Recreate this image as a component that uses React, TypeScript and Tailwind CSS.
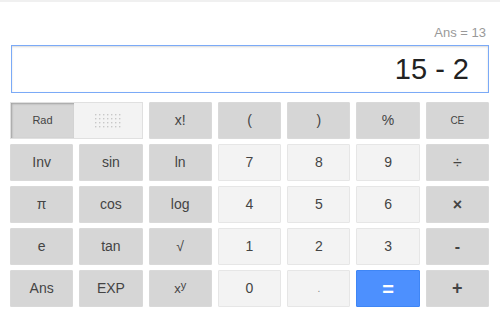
import type { ReactNode } from 'react'

type Kind = 'gray' | 'light' | 'blue'

function Key({ kind = 'gray', className = '', children }: { kind?: Kind; className?: string; children: ReactNode }) {
  const look =
    kind === 'blue'
      ? 'bg-[#4d90fe] border-[#3f86f5] text-white'
      : kind === 'light'
        ? 'bg-[#f3f3f3] border-[#e6e6e6] text-[#444]'
        : 'bg-[#d6d6d6] border-[#d9d9d9] text-[#444]'
  return (
    <div className={`flex h-[37px] items-center justify-center rounded-[1px] border ${look} ${className}`}>
      {children}
    </div>
  )
}

function Grip() {
  const dots = []
  for (let r = 0; r < 4; r++)
    for (let c = 0; c < 7; c++) dots.push(<rect key={`${r}-${c}`} x={c * 4} y={r * 4} width="1.4" height="1.4" fill="#c8c8c8" />)
  return (
    <svg width="26" height="14" viewBox="0 0 26 14">
      {dots}
    </svg>
  )
}

export default function App() {
  return (
    <div className="h-[317px] w-[500px] overflow-hidden border-t-2 border-[#f0f0f0] bg-white font-['Liberation_Sans',Arial,sans-serif]">
      <div className="flex justify-end pr-[14px] pt-[23px] text-[13px] leading-[15px] text-[#999]">Ans = 13</div>

      <div className="mx-[11px] mt-[5px] flex h-[48px] items-center justify-end border border-[#7baaf7] pr-[19px] shadow-[inset_0_1px_2px_rgba(0,0,0,0.15)]">
        <span className="text-[29px] leading-none text-[#222]">15 - 2</span>
      </div>

      <div className="ml-[10px] mt-[9px] grid w-[479px] grid-cols-7 gap-x-[6px] gap-y-[5px] text-[14px]">
        <div className="col-span-2 flex h-[37px] border border-[#e0e0e0]">
          <div className="flex w-[63px] items-center justify-center bg-[#d6d6d6] text-[11px] text-[#444] shadow-[inset_1px_1px_2px_rgba(0,0,0,0.25)]">
            Rad
          </div>
          <div className="flex flex-1 items-center justify-center bg-[#f3f3f3]">
            <Grip />
          </div>
        </div>
        <Key>x!</Key>
        <Key>(</Key>
        <Key>)</Key>
        <Key>%</Key>
        <Key className="text-[10px]">CE</Key>

        <Key>Inv</Key>
        <Key>sin</Key>
        <Key>ln</Key>
        <Key kind="light">7</Key>
        <Key kind="light">8</Key>
        <Key kind="light">9</Key>
        <Key className="text-[16px]">÷</Key>

        <Key>π</Key>
        <Key>cos</Key>
        <Key>log</Key>
        <Key kind="light">4</Key>
        <Key kind="light">5</Key>
        <Key kind="light">6</Key>
        <Key className="text-[16px] font-bold">×</Key>

        <Key>e</Key>
        <Key>tan</Key>
        <Key>√</Key>
        <Key kind="light">1</Key>
        <Key kind="light">2</Key>
        <Key kind="light">3</Key>
        <Key className="text-[16px] font-bold">-</Key>

        <Key>Ans</Key>
        <Key>EXP</Key>
        <Key className="text-[13px]">
          x<span className="relative -top-[3px] text-[11px]">y</span>
        </Key>
        <Key kind="light">0</Key>
        <Key kind="light" className="text-[10px] text-[#888]">.</Key>
        <Key kind="blue" className="text-[20px] font-bold">=</Key>
        <Key className="text-[18px] font-bold">+</Key>
      </div>
    </div>
  )
}
